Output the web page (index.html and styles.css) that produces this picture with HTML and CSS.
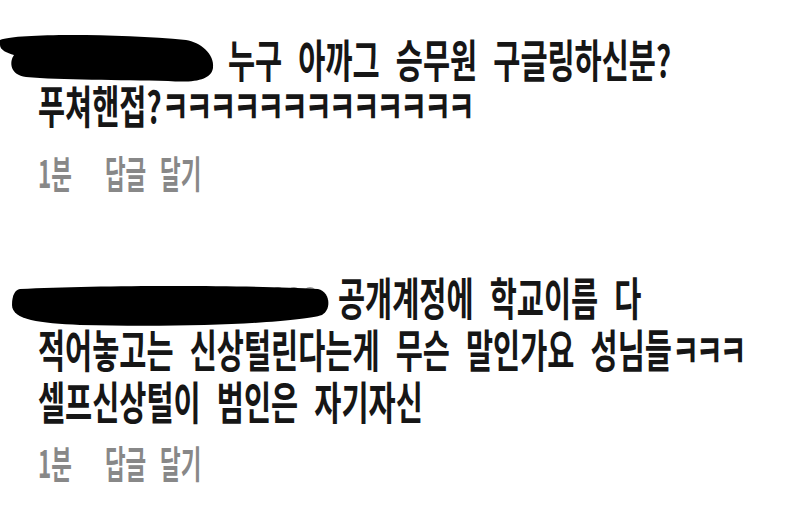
FILE: index.html
```html
<!DOCTYPE html>
<html lang="ko">
  <head>
    <meta charset="UTF-8" />
    <title>댓글</title>
    <link rel="stylesheet" href="styles.css">
  </head>

  <body>
    <div class="thread">
      <div class="comment first">
        <div class="comment-body">
          <div class="lines indent-1">누구 아까그 승무원 구글링하신분?<br>푸쳐핸접?<span class="kk">ㅋㅋㅋㅋㅋㅋㅋㅋㅋㅋㅋㅋㅋ</span></div>
          <!-- 아이디 가림 -->
          <svg class="redact redact-1" viewBox="0 31 220 56" preserveAspectRatio="none">
            <path d="M0 40 C20 33 120 34 186 40 C200 42 215 54 213 68 C211 80 195 83 168 81 C120 80 60 80 26 77 C10 75 9 62 14 55 C7 53 0 50 0 45 Z" fill="#000"/>
          </svg>
        </div>
        <div class="meta"><span>1분</span><span class="reply">답글 달기</span></div>
      </div>

      <div class="comment second">
        <div class="comment-body">
          <div class="lines indent-2">공개계정에 학교이름 다<br>적어놓고는 신상털린다는게 무슨 말인가요 성님들<span class="kk">ㅋㅋㅋ</span><br>셀프신상털이 범인은 자기자신</div>
          <svg class="redact redact-2" viewBox="0 278 340 54" preserveAspectRatio="none">
            <g fill="none" stroke="#9a9a9a" stroke-width="2">
              <circle cx="262" cy="294" r="6"/>
              <circle cx="278" cy="294" r="6"/>
              <circle cx="294" cy="294" r="6"/>
              <circle cx="310" cy="294" r="6"/>
            </g>
            <path d="M20 289 C100 285 250 285 318 289 C330 292 332 309 322 315 C300 322 200 328 80 325 C40 323 12 320 12 305 C12 295 15 290 20 289 Z" fill="#000"/>
          </svg>
        </div>
        <div class="meta"><span>1분</span><span class="reply">답글 달기</span></div>
      </div>
    </div>
  </body>
</html>
```

FILE: styles.css
```css
* {
  padding: 0;
  margin: 0;
}

html,
body {
  overflow: hidden;
  background-color: #fff;
}

.thread {
  --k: 0.655;
  --mk: 0.59;
  width: 810px;
  padding: 36px 0 30px;
  font-family: "Noto Sans CJK KR", "Noto Sans", sans-serif;
}

.comment {
  padding-left: 38px;
}

.second {
  margin-top: 79px;
}

.comment-body {
  position: relative;
}

/* 글씨가 좁고 긴 폰트라서 가로로 줄여줌 */
.lines {
  font-size: 45px;
  font-weight: 700;
  color: #161616;
  white-space: nowrap;
  word-spacing: 12px;
  transform: scaleX(var(--k));
  transform-origin: 0 0;
}

.kk {
  letter-spacing: -5px;
}

.first .lines {
  line-height: 46px;
}

.second .lines {
  line-height: 52px;
}

.indent-1 {
  text-indent: calc(190px / var(--k));
}

.indent-2 {
  text-indent: calc(300px / var(--k));
}

.redact {
  position: absolute;
  left: -38px;
}

.redact-1 {
  top: -5px;
  width: 220px;
  height: 56px;
}

.redact-2 {
  top: 7px;
  width: 340px;
  height: 54px;
}

.meta {
  font-size: 38px;
  font-weight: 700;
  line-height: 40px;
  color: #888;
  white-space: nowrap;
  word-spacing: 13px;
  transform: scaleX(var(--mk));
  transform-origin: 0 0;
}

.first .meta {
  margin-top: 24px;
}

.second .meta {
  margin-top: 15px;
}

.reply {
  margin-left: 56px;
}
```
